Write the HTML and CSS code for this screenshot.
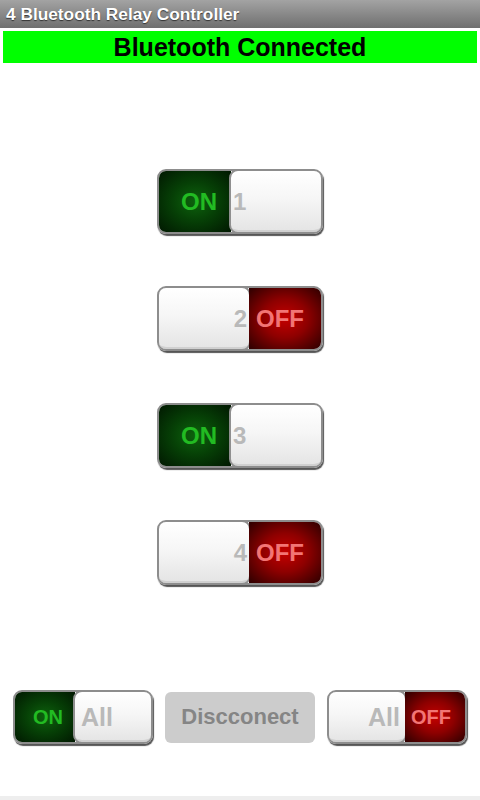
FILE: index.html
```html
<!DOCTYPE html>
<html lang="en">
<head>
    <meta charset="UTF-8">
    <meta name="viewport" content="width=device-width, initial-scale=1.0">
    <title>4 Bluetooth Relay Controller</title>
    <link rel="stylesheet" href="styles.css">
</head>
<body>
    <!-- Barra de titulo -->
    <div class="titlebar">4 Bluetooth Relay Controller</div>
    <div class="status">Bluetooth Connected</div>

    <!-- Reles -->
    <div class="relays">
        <div class="switch on">
            <div class="side">ON</div>
            <div class="knob">1</div>
        </div>
        <div class="switch off">
            <div class="knob">2</div>
            <div class="side">OFF</div>
        </div>
        <div class="switch on">
            <div class="side">ON</div>
            <div class="knob">3</div>
        </div>
        <div class="switch off">
            <div class="knob">4</div>
            <div class="side">OFF</div>
        </div>
    </div>

    <!-- Controles generales -->
    <div class="bottom-row">
        <div class="switch small on">
            <div class="side">ON</div>
            <div class="knob">All</div>
        </div>
        <button class="btn-disconnect">Discconect</button>
        <div class="switch small off">
            <div class="knob">All</div>
            <div class="side">OFF</div>
        </div>
    </div>

    <div class="navbar"></div>
</body>
</html>
```

FILE: styles.css
```css
body {
    margin: 0;
    font-family: 'Liberation Sans', Arial, sans-serif;
    background: #fff;
    width: 480px;
    height: 800px;
    overflow: hidden;
}
.titlebar {
    height: 28px;
    line-height: 29px;
    padding-left: 6px;
    background: linear-gradient(#a3a3a3, #6f6f6f);
    color: #fff;
    font-weight: bold;
    font-size: 17.3px;
    text-shadow: 0 1px 1px #333;
}
.status {
    margin: 3px 3px 0;
    height: 32px;
    line-height: 33px;
    background: #00ff00;
    color: #000;
    text-align: center;
    font-weight: bold;
    font-size: 25px;
}
.relays {
    display: flex;
    flex-direction: column;
    align-items: center;
    gap: 52px;
    padding-top: 106px;
}
.switch {
    display: flex;
    width: 166px;
    height: 65px;
    box-sizing: border-box;
    border: 2px solid #8d8d8d;
    border-radius: 9px;
    box-shadow: 1px 2px 1px #555;
    overflow: hidden;
    font-weight: bold;
    font-size: 24px;
}
.switch .side {
    box-sizing: border-box;
    width: 72px;
    flex-shrink: 0;
    display: flex;
    align-items: center;
    justify-content: center;
}
.switch.on .side {
    padding-left: 8px;
    background: radial-gradient(ellipse at center, #0d620d 0%, #064006 45%, #011801 100%);
    color: #22bb22;
}
.switch.off .side {
    padding-right: 10px;
    background: radial-gradient(ellipse at center, #c40000 0%, #8e0000 45%, #2c0000 100%);
    color: #f27575;
}
.switch .knob {
    flex: 1;
    display: flex;
    align-items: center;
    margin: -2px;
    border: 2px solid #8f8f8f;
    border-radius: 9px;
    background: linear-gradient(#ffffff, #f6f6f6 45%, #e4e4e4);
    box-shadow: inset 0 3px 0 -1px #fff, inset 0 -5px 0 -3px #d0d0d0;
    color: #b9b9b9;
}
.switch.on .knob {
    padding-left: 2px;
}
.switch.off .knob {
    justify-content: flex-end;
    padding-right: 2px;
}
.bottom-row {
    display: flex;
    justify-content: space-between;
    align-items: center;
    margin-top: 105px;
    padding: 0 13px;
}
.switch.small {
    width: 140px;
    height: 54px;
}
.switch.small .side {
    width: 60px;
    font-size: 20px;
}
.switch.small.on .side {
    padding-left: 6px;
}
.switch.small.off .side {
    padding-right: 8px;
}
.switch.small .knob {
    font-size: 25px;
}
.switch.small.on .knob {
    padding-left: 6px;
}
.switch.small.off .knob {
    padding-right: 5px;
}
.btn-disconnect {
    width: 150px;
    height: 51px;
    border: none;
    border-radius: 6px;
    background: #cccccc;
    color: #858585;
    font-family: 'Liberation Sans', Arial, sans-serif;
    font-weight: bold;
    font-size: 22px;
}
.navbar {
    margin-top: 52px;
    height: 4px;
    background: #eeeeee;
}
```
